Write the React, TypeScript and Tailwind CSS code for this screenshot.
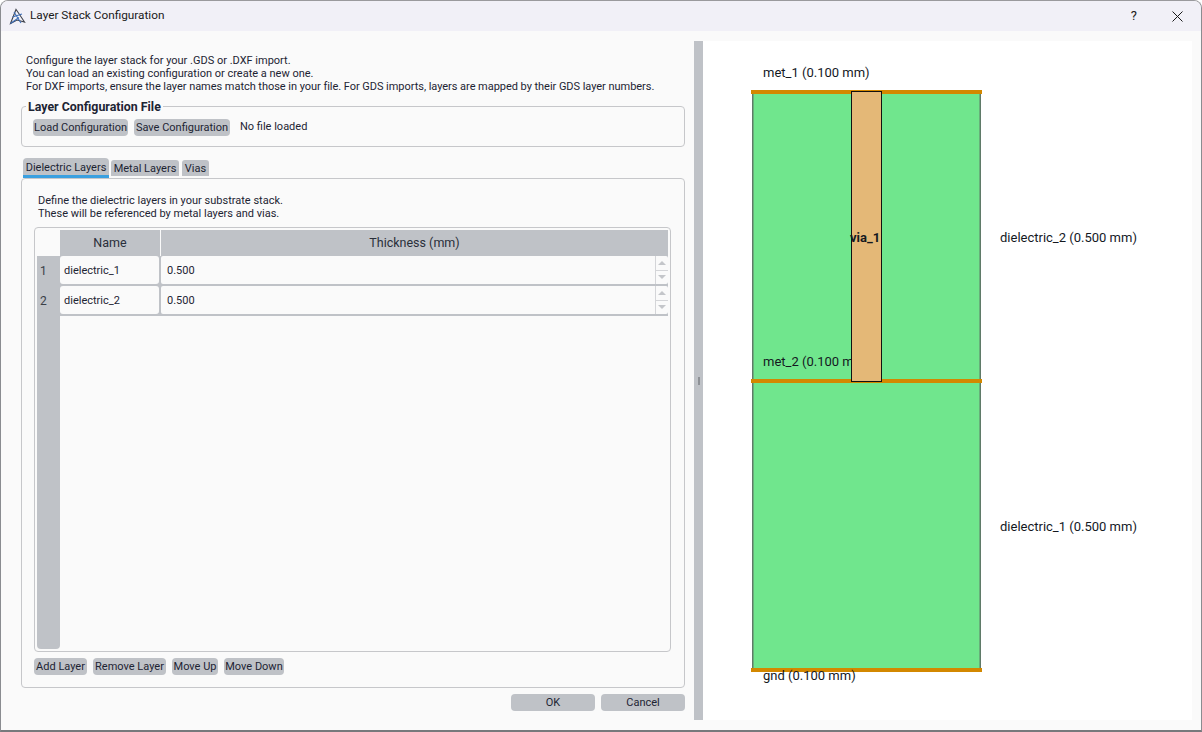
const font = { fontFamily: 'Roboto, "Open Sans", sans-serif' }

function GrayButton({ label, className }: { label: string; className: string }) {
  return (
    <button className={`flex h-[17px] items-center justify-center rounded-[4px] bg-[#bfc2c7] text-[11px] leading-none whitespace-nowrap text-[#1d2433] ${className}`}>
      {label}
    </button>
  )
}

function Spinner() {
  return (
    <div className="flex h-full w-[13px] shrink-0 flex-col border-l border-[#d4d5d8]">
      <div className="flex flex-1 items-center justify-center border-b border-[#d4d5d8]">
        <div className="h-0 w-0 border-x-[4px] border-b-[4px] border-x-transparent border-b-[#c4c6ca]" />
      </div>
      <div className="flex flex-1 items-center justify-center">
        <div className="h-0 w-0 border-x-[4px] border-t-[4px] border-x-transparent border-t-[#c4c6ca]" />
      </div>
    </div>
  )
}

function Row({ index, name }: { index: number; name: string }) {
  return (
    <div className="flex h-[30px] w-full">
      <div className="flex w-[23px] shrink-0 items-center pl-[3px] text-[12px] text-[#3a3f47]">
        {index}
      </div>
      <div className="flex h-[30px] w-full items-start bg-[#bfc2c7]">
        <div className="flex h-[28px] w-[99px] shrink-0 items-center rounded-[3px] bg-[#fafafa] pt-[2px] pl-[4px] text-[11px] text-[#1d2433]">{name}</div>
        <div className="ml-[2px] flex h-[28px] flex-1 items-center rounded-[2px] bg-[#fafafa] pl-[6px] text-[11px] text-[#1d2433]">
          <span className="flex-1 pt-[2px]">0.500</span>
          <Spinner />
        </div>
      </div>
    </div>
  )
}

function LayerTable() {
  return (
    <div className="mt-[7px] ml-[12px] flex h-[425px] w-[637px] flex-col rounded-[4px] border border-[#c6c7ca] p-[2px]">
      <div className="flex h-[26px] shrink-0">
        <div className="w-[23px] shrink-0" />
        <div className="flex w-[100px] items-center justify-center bg-[#bfc2c7] text-[12.5px] text-[#2a2f3a]">Name</div>
        <div className="w-px bg-[#fafafa]" />
        <div className="flex flex-1 items-center justify-center bg-[#bfc2c7] text-[12.5px] text-[#2a2f3a]">Thickness (mm)</div>
      </div>
      <div className="relative flex-1">
        <div className="absolute top-0 bottom-0 left-0 w-[23px] rounded-b-[4px] bg-[#bfc2c7]" />
        <div className="relative">
          <Row index={1} name="dielectric_1" />
          <Row index={2} name="dielectric_2" />
        </div>
      </div>
    </div>
  )
}

function DiagramLabel({ text, className }: { text: string; className: string }) {
  return <span className={`absolute text-[13px] leading-none whitespace-nowrap text-[#14181f] ${className}`}>{text}</span>
}

function StackDiagram() {
  return (
    <div className="relative h-[679px] flex-1 bg-white">
      <svg className="absolute inset-0" width="489" height="679">
        <rect x="50" y="50" width="227" height="578" fill="#70e68d" />
        <rect x="49" y="50" width="1.5" height="578" fill="#5f7a68" />
        <rect x="276.5" y="50" width="1.5" height="578" fill="#5f7a68" />
        <rect x="48" y="49" width="231" height="4" fill="#d38800" />
        <rect x="48" y="338" width="231" height="4" fill="#d38800" />
        <rect x="48" y="627" width="231" height="4" fill="#d38800" />
      </svg>
      <DiagramLabel text="met_1 (0.100 mm)" className="top-[25px] left-[60px]" />
      <DiagramLabel text="met_2 (0.100 mm)" className="top-[314px] left-[60px]" />
      <DiagramLabel text="gnd (0.100 mm)" className="top-[628px] left-[60px]" />
      <div className="absolute top-[50px] left-[148px] h-[291px] w-[31px] border border-[#111] bg-[#e4b877]" />
      <DiagramLabel text="via_1" className="top-[190px] left-[147px] font-bold" />
      <DiagramLabel text="dielectric_2 (0.500 mm)" className="top-[190px] left-[297px]" />
      <DiagramLabel text="dielectric_1 (0.500 mm)" className="top-[479px] left-[297px]" />
    </div>
  )
}

export default function App() {
  return (
    <div style={font} className="flex h-[732px] w-[1202px] flex-col overflow-hidden rounded-t-[8px] border-x border-t border-b-2 border-x-[#8a8c90] border-t-[#9a9a9d] border-b-[#77797c] bg-[#fafafa] text-[#1d2433]">
      <div className="flex h-[30px] shrink-0 items-center bg-[#f1f0f7]">
        <svg className="ml-[8px]" width="17" height="17" viewBox="0 0 17 17" fill="none">
          <path d="M1.5 15.5 L7 1.5 L9.5 5 L15.5 14 L8 12 Z" stroke="#3f424c" strokeWidth="1.1" />
          <path d="M3.5 9 L13 6 M5 4 L12 15 M1.5 15.5 L10 9.5" stroke="#3e6fb8" strokeWidth="1.1" />
        </svg>
        <span className="ml-[4px] text-[11.8px] text-[#1a1a1a]">Layer Stack Configuration</span>
        <span className="mr-[35px] ml-auto text-[13px] text-[#1a1a1a]">?</span>
        <svg className="mr-[18px]" width="11" height="11" viewBox="0 0 11 11" stroke="#1a1a1a" strokeWidth="1">
          <path d="M0.5 0.5 L10.5 10.5 M10.5 0.5 L0.5 10.5" />
        </svg>
      </div>

      <div className="flex min-h-0 flex-1 pt-[10px] pr-[9px]">
        <div className="flex w-[693px] shrink-0 flex-col pr-[9px] pl-[20px]">
          <div className="mt-[13px] pl-[5px] text-[11px] leading-[13px] whitespace-nowrap text-[#1d2433]">
            <p>Configure the layer stack for your .GDS or .DXF import.</p>
            <p>You can load an existing configuration or create a new one.</p>
            <p className="tracking-[-0.04px]">For DXF imports, ensure the layer names match those in your file. For GDS imports, layers are mapped by their GDS layer numbers.</p>
          </div>

          <fieldset className="mt-[7px] h-[47px] rounded-[4px] border border-[#c6c7ca] pl-[11px]">
            <legend className="ml-[-7px] px-[2px] text-[12.4px] leading-[13px] font-bold text-[#1d2433]">Layer Configuration File</legend>
            <div className="flex items-center gap-[6px] pt-[6px]">
              <GrayButton label="Load Configuration" className="w-[95px]" />
              <GrayButton label="Save Configuration" className="w-[96px]" />
              <span className="ml-[4px] text-[11px]">No file loaded</span>
            </div>
          </fieldset>

          <div className="mt-[11px] flex h-[20px] items-start pl-[2px]">
            <div className="flex h-[20px] w-[86px] items-center justify-center rounded-t-[4px] border-b-[3px] border-[#3aa0e0] bg-[#bfc2c7] pt-[3px] text-[11px]">Dielectric Layers</div>
            <div className="mt-[2px] ml-[2px] flex h-[16px] w-[68px] items-center justify-center rounded-t-[3px] bg-[#bfc2c7] pt-[2px] text-[11px]">Metal Layers</div>
            <div className="mt-[2px] ml-[3px] flex h-[16px] w-[27px] items-center justify-center rounded-t-[3px] bg-[#bfc2c7] pt-[2px] text-[11px]">Vias</div>
          </div>

          <div className="flex h-[510px] flex-col rounded-[4px] border border-[#c6c7ca]">
            <div className="mt-[15px] pl-[16px] text-[11px] leading-[13px]">
              <p>Define the dielectric layers in your substrate stack.</p>
              <p>These will be referenced by metal layers and vias.</p>
            </div>
            <LayerTable />
            <div className="mt-[6px] ml-[12px] flex gap-[6px]">
              <GrayButton label="Add Layer" className="w-[53px]" />
              <GrayButton label="Remove Layer" className="w-[73px]" />
              <GrayButton label="Move Up" className="w-[46px]" />
              <GrayButton label="Move Down" className="w-[60px]" />
            </div>
          </div>

          <div className="mt-[6px] flex justify-end gap-[6px]">
            <GrayButton label="OK" className="w-[84px]" />
            <GrayButton label="Cancel" className="w-[84px]" />
          </div>
        </div>

        <div className="flex h-[679px] w-[9px] shrink-0 items-center justify-center bg-[#bfc2c7]">
          <div className="h-[8px] w-[2px] bg-[#8f9297]" />
        </div>
        <StackDiagram />
      </div>
    </div>
  )
}
